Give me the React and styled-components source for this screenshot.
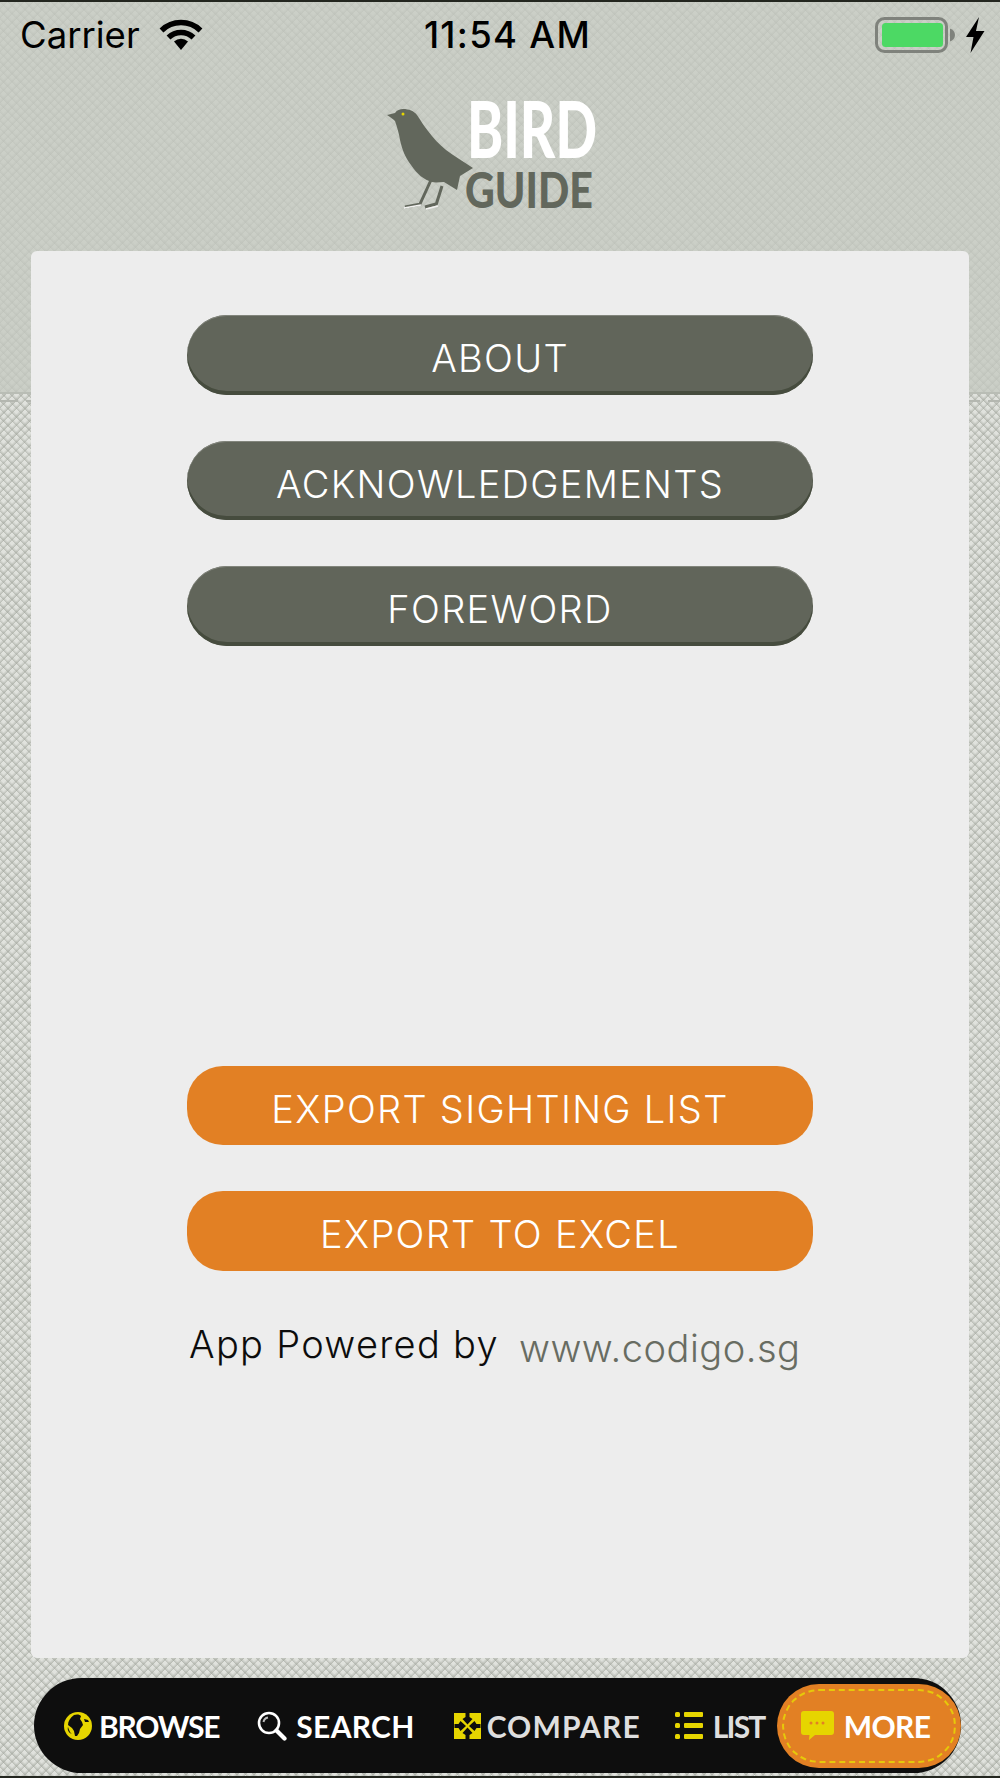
import React from "react";
import styled, { createGlobalStyle } from "styled-components";

const Global = createGlobalStyle`
  html, body { margin: 0; padding: 0; }
  body { font-family: "Inter", "Liberation Sans", sans-serif; }
`;

const hatch = (c) => `repeating-linear-gradient(45deg, ${c} 0, transparent 3px, transparent 6px), repeating-linear-gradient(-45deg, ${c} 0, transparent 3px, transparent 6px)`;

const Page = styled.div`
  box-sizing: border-box;
  width: 1000px;
  height: 1778px;
  overflow: hidden;
  border-top: 2px solid #23261f;
  border-bottom: 2px solid #23261f;
  display: flex;
  flex-direction: column;
  background-color: #e0e2dd;
  background-image:
    linear-gradient(#b9bdb5, #b9bdb5),
    repeating-linear-gradient(90deg, #b4b7b0 0 18px, transparent 18px 26px),
    ${hatch("rgba(186,190,182,.5)")},
    linear-gradient(#cbcfc7, #cbcfc7),
    ${hatch("rgba(160,164,155,.6)")};
  background-size:
    100% 2px,
    100% 2px,
    100% 391px, 100% 391px,
    100% 391px,
    auto, auto;
  background-position:
    0 390px,
    0 398px,
    0 0, 0 0,
    0 0,
    0 0, 0 0;
  background-repeat: no-repeat, no-repeat, no-repeat, no-repeat, no-repeat, repeat, repeat;
`;

const StatusBar = styled.div`
  height: 66px;
  padding: 0 13px 0 20px;
  display: grid;
  grid-template-columns: 1fr auto 1fr;
  align-items: center;
  color: #000;
`;

const StatusLeft = styled.div`
  display: flex;
  align-items: center;
  gap: 19px;
  font-size: 36.5px;
`;

const StatusTime = styled.div`
  font-size: 36.5px;
  font-weight: 500;
  letter-spacing: 1.3px;
  margin-left: 8px;
`;

const StatusRight = styled.div`
  display: flex;
  justify-content: flex-end;
  align-items: center;
`;

const Logo = styled.svg`
  display: block;
  align-self: center;
  width: 320px;
  height: 160px;
  margin-top: 2px;
`;

const Card = styled.main`
  box-sizing: border-box;
  margin: 21px 31px 0;
  height: 1407px;
  padding-top: 64px;
  border-radius: 6px;
  background: #ededed;
  display: flex;
  flex-direction: column;
  align-items: center;
`;

const ButtonStack = styled.div`
  width: 626px;
  display: flex;
  flex-direction: column;
  gap: 46px;
  margin-top: ${(p) => p.$offset || 0}px;
`;

const PillButton = styled.button`
  box-sizing: border-box;
  height: 79.5px;
  width: 100%;
  border: 0;
  border-radius: ${(p) => (p.$accent ? 36 : 40)}px;
  padding: 7px 0 0;
  color: #fff;
  font-family: "Inter", "Lato", sans-serif;
  font-size: 38px;
  font-weight: 300;
  letter-spacing: 1.3px;
  background: ${(p) => (p.$accent ? "#e28024" : "#61655a")};
  box-shadow: ${(p) =>
    p.$accent ? "none" : "inset 0 -4px 0 #464c3e, inset 0 1px 0 #82857c"};
`;

const Credit = styled.div`
  width: 626px;
  box-sizing: border-box;
  padding-left: 2px;
  margin-top: 50px;
  display: flex;
  align-items: baseline;
  gap: 20px;
  font-family: "Inter", "Lato", sans-serif;
  font-size: 38px;
  font-weight: 300;
`;

const CreditLabel = styled.span`
  color: #0c0c0c;
  letter-spacing: 1.3px;
`;

const CreditLink = styled.a`
  color: #686c62;
  letter-spacing: 0.5px;
  position: relative;
  top: 4px;
`;

const TabBar = styled.nav`
  box-sizing: border-box;
  margin: 20px 39px 0 34px;
  height: 95px;
  border-radius: 48px;
  background: #0e0e0e;
  padding-left: 30px;
  display: flex;
  align-items: center;
`;

const Tab = styled.div`
  display: flex;
  align-items: center;
  gap: ${(p) => p.$gap || 7}px;
  margin-right: ${(p) => p.$after}px;
  color: ${(p) => p.$color || "#fff"};
  font-family: "Lato", sans-serif;
  font-weight: 700;
  font-size: 30px;
  letter-spacing: ${(p) => p.$spacing}px;
  line-height: 1;
`;

const MorePill = styled.div`
  box-sizing: border-box;
  width: 184px;
  height: 84px;
  border-radius: 42px;
  background: #e28024;
  padding: 5px;
  display: flex;
`;

const MoreInner = styled.div`
  flex: 1;
  border: 2px dashed #e6c90a;
  border-radius: 37px;
  padding-right: 6px;
  display: flex;
  align-items: center;
  justify-content: center;
  gap: 10px;
  color: #fff;
  font-family: "Lato", sans-serif;
  font-weight: 700;
  font-size: 30px;
  letter-spacing: -0.6px;
  line-height: 1;
`;

const Yellow = "#e6d500";

const Wifi = () => (
  <svg width="44" height="32" viewBox="0 0 44 32">
    <g fill="none" stroke="#000" strokeWidth="5.5">
      <path d="M2.5 11.5a28 28 0 0 1 39 0" />
      <path d="M9.5 18.5a18 18 0 0 1 25 0" />
    </g>
    <path d="M15 22.5a10.500 10.500 0 0 1 14 0L22 31z" fill="#000" />
  </svg>
);

const Battery = () => (
  <svg width="112" height="36" viewBox="0 0 112 36">
    <rect x="1.500" y="1.500" width="70" height="33" rx="8" fill="none" stroke="#7f827c" strokeWidth="3" />
    <rect x="7" y="6" width="61" height="24" rx="3.500" fill="#4cd964" />
    <path d="M75 11.500c3 1 5 3.500 5 6.500s-2 5.500-5 6.500z" fill="#7f827c" />
    <path d="M104 0 91 20h7.500l-3 16 14-22h-8.500z" fill="#000" />
  </svg>
);

const Globe = () => (
  <svg width="28" height="28" viewBox="0 0 28 28">
    <circle cx="14" cy="14" r="14" fill={Yellow} />
    <path
      d="M10 3c3-1 6-.5 7 1l-1 3 2 3 1 3-3 4-1 4-2 3h-2l-1-5-2-3-4-3c0-4 2-7 6-10z"
      fill="#0e0e0e"
    />
    <path d="M4 15c1 3 2 6 4 7-3-1-5-4-4-7zM20 7l4 1 1 2-4 0z" fill="#0e0e0e" />
  </svg>
);

const Search = () => (
  <svg width="30" height="30" viewBox="0 0 30 30">
    <circle cx="12" cy="12" r="10" fill="none" stroke="#fff" strokeWidth="2.600" />
    <path d="M6.500 11a5.500 5.500 0 0 1 4.500-4.500" fill="none" stroke="#bbb" strokeWidth="2" />
    <path d="M19.500 19.500 27.500 27.500" stroke="#fff" strokeWidth="4.200" strokeLinecap="round" />
  </svg>
);

const notch = "M11.500 0h4v4l3 2-5 5.500-5-5.500 3-2z";

const Compare = () => (
  <svg width="27" height="26" viewBox="0 0 27 26">
    <rect width="27" height="26" fill={Yellow} />
    <g fill="#0e0e0e">
      <path d={notch} />
      <path d={notch} transform="rotate(90 13.500 13)" />
      <path d={notch} transform="rotate(180 13.500 13)" />
      <path d={notch} transform="rotate(270 13.500 13)" />
    </g>
  </svg>
);

const ListIcon = () => (
  <svg width="28" height="27" viewBox="0 0 28 27">
    <g fill={Yellow}>
      <rect x="0" y="0" width="5" height="5" rx="1.500" />
      <rect x="0" y="11" width="5" height="5" rx="1.500" />
      <rect x="0" y="22" width="5" height="5" rx="1.500" />
      <rect x="9" y="0" width="19" height="5" rx="1" />
      <rect x="9" y="11" width="19" height="5" rx="1" />
      <rect x="9" y="22" width="19" height="5" rx="1" />
    </g>
  </svg>
);

const Chat = () => (
  <svg width="33" height="29" viewBox="0 0 33 29">
    <path
      d="M3 0h27a3 3 0 0 1 3 3v18a3 3 0 0 1-3 3H14l-6 5 .5-5H3a3 3 0 0 1-3-3V3a3 3 0 0 1 3-3z"
      fill={Yellow}
    />
    <g fill="#e28024">
      <circle cx="10" cy="12" r="1.500" />
      <circle cx="16" cy="12" r="1.500" />
      <circle cx="22" cy="12" r="1.500" />
    </g>
  </svg>
);

const App = () => (
  <Page>
    <Global />
    <StatusBar>
      <StatusLeft>
        <span>Carrier</span>
        <Wifi />
      </StatusLeft>
      <StatusTime>11:54 AM</StatusTime>
      <StatusRight>
        <Battery />
      </StatusRight>
    </StatusBar>

    <Logo viewBox="340 70 320 160" aria-label="Bird Guide">
      <g transform="translate(-2 0)">
        <path
          d="M389 115l8-2c2-3 5-4 8-4 6 0 11 2 14 6 4 6 7 11 11 16 5 7 11 13 18 19 8 6 18 12 27 18l-13 8-3 14-13-8c-4 0-8 1-12 0-8-2-15-8-21-17-6-8-9-16-11-25-1-7-3-13-5-19-2-2-5-4-8-6z"
          fill="#62675c"
        />
        <path
          d="M433 180l-11 24M423 204l-16 3M444 186l-6 19M438 204l-11 3"
          stroke="#62675c"
          strokeWidth="3"
          fill="none"
        />
        <path d="M406 208l17-3M428 209l12-3" stroke="#f2f2f0" strokeWidth="1.500" fill="none" />
        <circle cx="405" cy="114" r="1.500" fill="#e6d500" />
      </g>
      <text
        x="467"
        y="158"
        fontFamily="Lato, sans-serif"
        fontWeight="900"
        fontSize="78"
        fill="#fff"
        textLength="130"
        lengthAdjust="spacingAndGlyphs"
      >
        BIRD
      </text>
      <text
        x="465"
        y="208"
        fontFamily="Lato, sans-serif"
        fontWeight="900"
        fontSize="50"
        fill="#62675c"
        textLength="128"
        lengthAdjust="spacingAndGlyphs"
      >
        GUIDE
      </text>
    </Logo>

    <Card>
      <ButtonStack>
        <PillButton>ABOUT</PillButton>
        <PillButton>ACKNOWLEDGEMENTS</PillButton>
        <PillButton>FOREWORD</PillButton>
      </ButtonStack>
      <ButtonStack $offset={420}>
        <PillButton $accent>EXPORT SIGHTING LIST</PillButton>
        <PillButton $accent>EXPORT TO EXCEL</PillButton>
      </ButtonStack>
      <Credit>
        <CreditLabel>App Powered by</CreditLabel>
        <CreditLink>www.codigo.sg</CreditLink>
      </Credit>
    </Card>

    <TabBar>
      <Tab $after={38} $spacing={-1.2}>
        <Globe />
        BROWSE
      </Tab>
      <Tab $after={39} $gap={9} $spacing={0.3}>
        <Search />
        SEARCH
      </Tab>
      <Tab $after={34} $gap={6} $spacing={1.1} $color="#dedede">
        <Compare />
        COMPARE
      </Tab>
      <Tab $after={12} $gap={10} $spacing={-1.8} $color="#dedede">
        <ListIcon />
        LIST
      </Tab>
      <MorePill>
        <MoreInner>
          <Chat />
          MORE
        </MoreInner>
      </MorePill>
    </TabBar>
  </Page>
);

export default App;
